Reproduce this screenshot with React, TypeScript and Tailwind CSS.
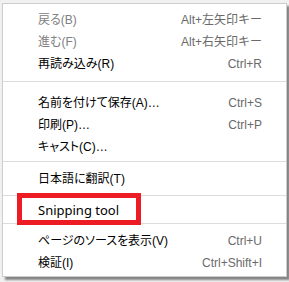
import React from "react";

type Item = { label: string; shortcut?: string; disabled?: boolean };

const ff = { fontFamily: '"Liberation Sans", "Noto Sans CJK JP", sans-serif' };

function Row({ label, shortcut, disabled }: Item) {
  return (
    <div className="flex h-[22px] items-center justify-between pl-[35px] pr-[24px] text-[12px] leading-none">
      <span className={`[font-feature-settings:'palt'] ${disabled ? "text-[#808080]" : "text-black"}`}>{label}</span>
      {shortcut ? <span className="text-[#6a6a6a]">{shortcut}</span> : null}
    </div>
  );
}

function Sep({ above, below }: { above: string; below: string }) {
  return (
    <div className={`${above} ${below}`}>
      <div className="h-px bg-[#dcdcdc]" />
    </div>
  );
}

export default function App() {
  return (
    <div className="relative h-[282px] w-[289px] overflow-hidden bg-[#f1f1f1] pl-[2px] pt-[3px]" style={ff}>
      <div className="relative w-[285px] border border-[#cdcdcd] bg-white pb-[2px] pt-[5px] shadow-[3px_3px_2px_rgba(0,0,0,0.45)]">
        <Row label="戻る(B)" shortcut="Alt+左矢印キー" disabled />
        <Row label="進む(F)" shortcut="Alt+右矢印キー" disabled />
        <Row label="再読み込み(R)" shortcut="Ctrl+R" />
        <Sep above="pt-[6px]" below="pb-[10px]" />
        <Row label="名前を付けて保存(A)…" shortcut="Ctrl+S" />
        <Row label="印刷(P)…" shortcut="Ctrl+P" />
        <Row label="キャスト(C)…" />
        <Sep above="pt-[3px]" below="pb-[6px]" />
        <Row label="日本語に翻訳(T)" />
        <Sep above="pt-[5px]" below="pb-[4px]" />
        <div className="flex h-[22px] items-center pl-[35px] text-[13px] text-black" style={{ fontFamily: '"Noto Sans", sans-serif' }}>
          Snipping tool
        </div>
        <Sep above="pt-[1px]" below="pb-[6px]" />
        <Row label="ページのソースを表示(V)" shortcut="Ctrl+U" />
        <Row label="検証(I)" shortcut="Ctrl+Shift+I" />
        <div className="pointer-events-none absolute left-[14px] top-[189px] h-[32px] w-[124px] border-[5px] border-[#ed1c24]" />
      </div>
    </div>
  );
}
